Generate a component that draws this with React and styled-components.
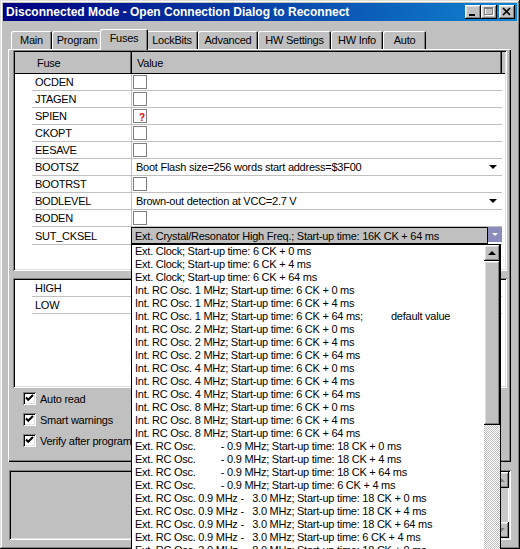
import React from 'react';
import styled, { createGlobalStyle, css } from 'styled-components';

const GlobalStyle = createGlobalStyle`
  html, body {
    margin: 0;
    padding: 0;
    background: #c0c0c0;
    overflow: hidden;
  }
  body {
    font-family: "Liberation Sans", Arial, sans-serif;
    font-size: 11px;
    letter-spacing: -0.25px;
    color: #000;
  }
`;

const raised = css`
  box-shadow: inset -1px -1px #000, inset 1px 1px #fff, inset -2px -2px #808080, inset 2px 2px #dfdfdf;
`;

const sunken = css`
  box-shadow: inset 1px 1px #808080, inset -1px -1px #fff, inset 2px 2px #000, inset -2px -2px #dfdfdf;
`;

const TABS = [
  { label: 'Main', w: 41 },
  { label: 'Program', w: 50 },
  { label: 'Fuses', w: 44, active: true },
  { label: 'LockBits', w: 52 },
  { label: 'Advanced', w: 60 },
  { label: 'HW Settings', w: 73 },
  { label: 'HW Info', w: 52 },
  { label: 'Auto', w: 43 },
];

const FUSES = [
  { name: 'OCDEN', kind: 'check' },
  { name: 'JTAGEN', kind: 'check' },
  { name: 'SPIEN', kind: 'unknown' },
  { name: 'CKOPT', kind: 'check' },
  { name: 'EESAVE', kind: 'check' },
  { name: 'BOOTSZ', kind: 'select', value: 'Boot Flash size=256 words start address=$3F00' },
  { name: 'BOOTRST', kind: 'check' },
  { name: 'BODLEVEL', kind: 'select', value: 'Brown-out detection at VCC=2.7 V' },
  { name: 'BODEN', kind: 'check' },
  { name: 'SUT_CKSEL', kind: 'combo', value: 'Ext. Crystal/Resonator High Freq.; Start-up time: 16K CK + 64 ms' },
];

// clock options as the programmer lists them (padded with spaces)
const OPTIONS = (() => {
  const out = [];
  ['0', '4', '64'].forEach((t) => out.push(`Ext. Clock; Start-up time: 6 CK + ${t} ms`));
  ['1', '2', '4', '8'].forEach((f) =>
    ['0', '4', '64'].forEach((t) =>
      out.push(
        `Int. RC Osc. ${f} MHz; Start-up time: 6 CK + ${t} ms${f === '1' && t === '64' ? ';          default value' : ''}`
      )
    )
  );
  const ext = ['Ext. RC Osc.         - 0.9 MHz', 'Ext. RC Osc. 0.9 MHz -   3.0 MHz', 'Ext. RC Osc. 3.0 MHz -   8.0 MHz'];
  ext.forEach((r) => {
    ['18 CK + 0 ms', '18 CK + 4 ms', '18 CK + 64 ms', '6 CK + 4 ms'].forEach((t) =>
      out.push(`${r}; Start-up time: ${t}`)
    );
  });
  return out;
})();

const App = () => (
  <>
    <GlobalStyle />
    <Window>
      <TitleBar>
        <Title>Disconnected Mode - Open Connection Dialog to Reconnect</Title>
        <CaptionButton>
          <svg width='16' height='14' viewBox='0 0 16 14'>
            <rect x='4' y='9' width='6' height='2' fill='#000' />
          </svg>
        </CaptionButton>
        <CaptionButton>
          <svg width='16' height='14' viewBox='0 0 16 14'>
            <rect x='4.5' y='3.5' width='8' height='7' fill='none' stroke='#fff' />
            <rect x='3.5' y='2.5' width='8' height='7' fill='none' stroke='#808080' />
            <rect x='3' y='3' width='9' height='1' fill='#808080' />
          </svg>
        </CaptionButton>
        <CaptionButton $gap={2}>
          <svg width='16' height='14' viewBox='0 0 16 14'>
            <path d='M4 3 L11 10 M11 3 L4 10' stroke='#000' strokeWidth='1.7' />
          </svg>
        </CaptionButton>
      </TitleBar>

      <TabStrip>
        {TABS.map((t) => (
          <Tab key={t.label} $w={t.w} $active={t.active}>
            {t.label}
          </Tab>
        ))}
      </TabStrip>

      <Panel>
        <ListBox $h={221}>
          <HeaderRow>
            <HeaderCell $pad={22}>Fuse</HeaderCell>
            <HeaderCell $pad={5}>Value</HeaderCell>
            <HeaderCell $pad={0} />
          </HeaderRow>
          {FUSES.map((f) => (
            <Row key={f.name}>
              <Indent />
              <NameCell>{f.name}</NameCell>
              <ValueCell>
                {f.kind === 'check' && <ValueCheck />}
                {f.kind === 'unknown' && (
                  <ValueCheck>
                    <Unknown>?</Unknown>
                  </ValueCheck>
                )}
                {f.kind === 'select' && (
                  <>
                    <ValueText>{f.value}</ValueText>
                    <DropArrow />
                  </>
                )}
                {f.kind === 'combo' && (
                  <Combo>
                    <ComboField>{f.value}</ComboField>
                    <ComboButton>
                      <DropArrow $light />
                    </ComboButton>
                    <DropList>
                      <Options>
                        {OPTIONS.map((o, i) => (
                          <Option key={i}>{o}</Option>
                        ))}
                      </Options>
                      <ScrollBar>
                        <ScrollButton>
                          <UpArrow />
                        </ScrollButton>
                        <Thumb $h={164} />
                        <Track />
                      </ScrollBar>
                    </DropList>
                  </Combo>
                )}
              </ValueCell>
              <Filler />
            </Row>
          ))}
        </ListBox>

        <ListBox $h={110} $gap={7}>
          {['HIGH', 'LOW'].map((r) => (
            <Row key={r}>
              <Indent />
              <NameCell>{r}</NameCell>
              <ValueCell />
              <Filler />
            </Row>
          ))}
        </ListBox>

        <Settings>
          {['Auto read', 'Smart warnings', 'Verify after programming'].map((l) => (
            <CheckRow key={l}>
              <CheckBox>
                <svg width='13' height='13' viewBox='0 0 13 13'>
                  <path d='M3 5.5 L5.2 7.8 L10 3' fill='none' stroke='#000' strokeWidth='2' />
                </svg>
              </CheckBox>
              <span>{l}</span>
            </CheckRow>
          ))}
        </Settings>
      </Panel>

      <LogBox>
        <ScrollBar $plain>
          <ScrollButton>
            <UpArrow $disabled />
          </ScrollButton>
          <PlainTrack />
          <ScrollButton>
            <DownArrow $disabled />
          </ScrollButton>
        </ScrollBar>
      </LogBox>
    </Window>
  </>
);

const Window = styled.div`
  width: 520px;
  height: 549px;
  box-sizing: border-box;
  padding: 3px;
  background: #c0c0c0;
  box-shadow: inset -1px -1px #000, inset 1px 1px #dfdfdf, inset -2px -2px #808080, inset 2px 2px #fff;
  display: flex;
  flex-direction: column;
  overflow: hidden;
`;

const TitleBar = styled.div`
  flex: none;
  height: 18px;
  display: flex;
  align-items: center;
  padding: 0 2px 0 3px;
  background: linear-gradient(90deg, #000080, #1084d0);
`;

const Title = styled.span`
  flex: 1;
  color: #fff;
  font-weight: bold;
  font-size: 12px;
  letter-spacing: 0;
  white-space: nowrap;
`;

const CaptionButton = styled.div`
  width: 16px;
  height: 14px;
  margin-left: ${(p) => p.$gap || 0}px;
  background: #c0c0c0;
  ${raised}
  display: flex;
  svg {
    display: block;
  }
`;

const TabStrip = styled.div`
  flex: none;
  height: 20px;
  margin-top: 8px;
  padding-left: 8px;
  display: flex;
  align-items: flex-end;
`;

const Tab = styled.div`
  box-sizing: border-box;
  width: ${(p) => p.$w}px;
  height: 18px;
  display: flex;
  align-items: center;
  justify-content: center;
  white-space: nowrap;
  background: #c0c0c0;
  border-radius: 2px 2px 0 0;
  box-shadow: inset 1px 1px #fff, inset -1px 0 #000, inset -2px 0 #808080;
  ${(p) =>
    p.$active &&
    css`
      width: ${p.$w + 4}px;
      height: 21px;
      margin: 0 -2px -1px;
      padding-bottom: 3px;
      position: relative;
      z-index: 1;
    `}
`;

const Panel = styled.div`
  flex: none;
  height: 413px;
  box-sizing: border-box;
  margin: 0 6px 0 5px;
  padding: 1px 4px 2px 5px;
  box-shadow: inset 1px 1px #fff, inset -1px -1px #000, inset -2px -2px #808080;
  display: flex;
  flex-direction: column;
`;

const ListBox = styled.div`
  flex: none;
  height: ${(p) => p.$h}px;
  margin-top: ${(p) => p.$gap || 0}px;
  box-sizing: border-box;
  padding: 2px;
  background: #fff;
  ${sunken}
`;

const HeaderRow = styled.div`
  display: grid;
  grid-template-columns: 117px 1fr 3px;
  height: 22px;
  box-sizing: border-box;
  border-bottom: 1px solid #000;
  background: #c0c0c0;
`;

const HeaderCell = styled.div`
  display: flex;
  align-items: center;
  padding-left: ${(p) => p.$pad}px;
  box-shadow: inset -1px 0 #000, inset -2px 0 #606060;
  &:last-child {
    box-shadow: none;
  }
`;

const Row = styled.div`
  display: grid;
  grid-template-columns: 17px 100px 1fr 3px;
  height: 17px;
`;

const Indent = styled.div``;
const Filler = styled.div``;

const NameCell = styled.div`
  display: flex;
  align-items: center;
  padding-left: 3px;
  border-right: 1px solid #c0c0c0;
  border-bottom: 1px solid #c0c0c0;
`;

const ValueCell = styled.div`
  display: flex;
  align-items: center;
  padding-left: 1px;
  border-bottom: 1px solid #c0c0c0;
  min-width: 0;
`;

const ValueCheck = styled.div`
  width: 14px;
  height: 14px;
  box-sizing: border-box;
  border: 1px solid #808080;
  background: #fff;
  display: flex;
  align-items: flex-end;
  justify-content: flex-end;
`;

const Unknown = styled.span`
  color: #e00000;
  font-weight: bold;
  font-size: 10px;
  line-height: 9px;
  letter-spacing: 0;
  margin: 0 1px 0 0;
`;

const ValueText = styled.span`
  flex: 1;
  padding-left: 3px;
  white-space: nowrap;
`;

const DropArrow = styled.span`
  width: 0;
  height: 0;
  margin-right: ${(p) => (p.$light ? 0 : 5)}px;
  border-left: ${(p) => (p.$light ? 3 : 4)}px solid transparent;
  border-right: ${(p) => (p.$light ? 3 : 4)}px solid transparent;
  border-top: ${(p) => (p.$light ? 3 : 4)}px solid ${(p) => (p.$light ? '#fff' : '#000')};
`;

const Combo = styled.div`
  position: relative;
  display: flex;
  width: 371px;
  height: 17px;
  margin-left: -2px;
  align-self: flex-start;
`;

const ComboField = styled.div`
  flex: 1;
  box-sizing: border-box;
  border: 1px solid #000;
  background: #c0c0c0;
  padding-left: 3px;
  display: flex;
  align-items: center;
  white-space: nowrap;
`;

const ComboButton = styled.div`
  width: 14px;
  height: 15px;
  background: #8c8cbc;
  display: flex;
  align-items: center;
  justify-content: center;
`;

const DropList = styled.div`
  position: absolute;
  top: 100%;
  left: 0;
  width: 370px;
  height: 320px;
  box-sizing: border-box;
  border: 1px solid #000;
  background: #fff;
  display: flex;
  z-index: 5;
`;

const Options = styled.div`
  flex: 1;
  overflow: hidden;
`;

const Option = styled.div`
  height: 13px;
  line-height: 13px;
  padding-left: 3px;
  white-space: pre;
`;

const ScrollBar = styled.div`
  width: 16px;
  flex: none;
  display: flex;
  flex-direction: column;
  ${(p) =>
    p.$plain &&
    css`
      margin-left: auto;
      height: 100%;
    `}
`;

const ScrollButton = styled.div`
  flex: none;
  height: 16px;
  background: #c0c0c0;
  ${raised}
  display: flex;
  align-items: center;
  justify-content: center;
`;

const UpArrow = styled.span`
  width: 0;
  height: 0;
  border-left: 4px solid transparent;
  border-right: 4px solid transparent;
  border-bottom: 4px solid ${(p) => (p.$disabled ? '#808080' : '#000')};
`;

const DownArrow = styled(UpArrow)`
  border-bottom: 0;
  border-top: 4px solid ${(p) => (p.$disabled ? '#808080' : '#000')};
`;

const Thumb = styled.div`
  flex: none;
  height: ${(p) => p.$h}px;
  background: #c0c0c0;
  ${raised}
`;

const Track = styled.div`
  flex: 1;
  background: repeating-conic-gradient(#c0c0c0 0 25%, #fff 0 50%) 0 0 / 2px 2px;
`;

const PlainTrack = styled.div`
  flex: 1;
  background: #c8c8c8;
  box-shadow: inset -1px 0 #fff;
`;

const Settings = styled.div`
  padding-left: 10px;
  display: flex;
  flex-direction: column;
`;

const CheckRow = styled.label`
  height: 21px;
  display: flex;
  align-items: center;
  gap: 4px;
  white-space: nowrap;
`;

const CheckBox = styled.span`
  width: 13px;
  height: 13px;
  background: #fff;
  ${sunken}
  svg {
    display: block;
  }
`;

const LogBox = styled.div`
  flex: none;
  height: 70px;
  box-sizing: border-box;
  margin: 8px 6px 0 6px;
  padding: 2px;
  background: #c0c0c0;
  ${sunken}
  display: flex;
`;

export default App;
